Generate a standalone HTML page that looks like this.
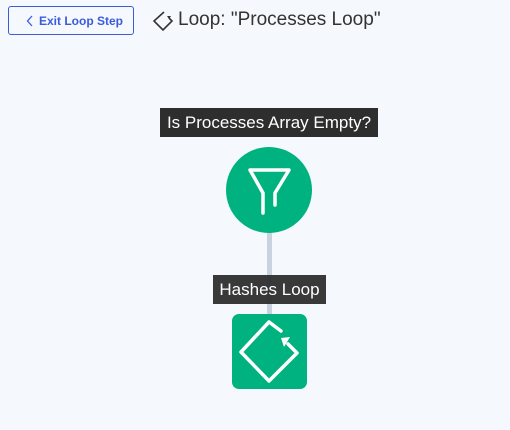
<!DOCTYPE html>
<html><head><style>
body{margin:0;width:510px;height:430px;background:#f5f9fd;font-family:"Liberation Sans",sans-serif;position:relative;overflow:hidden}
.btn{position:absolute;left:8px;top:6px;width:126px;height:29px;border:1px solid #3b5bdb;border-radius:3px;color:#3b5bdb;font-size:12px;font-weight:bold;box-sizing:border-box;line-height:28px}
.title{position:absolute;left:178px;top:9px;font-size:19px;color:#333}
.lbl{position:absolute;background:#2e2e2e;color:#fff;font-size:17px;text-align:center;box-sizing:border-box}
</style></head><body>
<div class="btn"><svg style="position:absolute;left:17px;top:8px" width="8" height="12"><path d="M6 1 L1.5 6 L6 11" fill="none" stroke="#3b5bdb" stroke-width="1.3"/></svg><span style="position:absolute;left:30px">Exit Loop Step</span></div>
<svg style="position:absolute;left:152px;top:10px" width="22" height="22"><path d="M12 2 L2 11 L11 20 L20 11 L17 8" fill="none" stroke="#333" stroke-width="1.6"/><path d="M15 6 L19 6 L17 9z" fill="#333"/></svg>
<div class="title">Loop: "Processes Loop"</div>
<div style="position:absolute;left:267px;top:232px;width:5px;height:84px;background:#c8d3df"></div>
<div class="lbl" style="left:160px;top:108px;width:218px;height:29px;line-height:29px">Is Processes Array Empty?</div>
<div style="position:absolute;left:226px;top:147px;width:86px;height:86px;border-radius:50%;background:#00b27f"></div>
<svg style="position:absolute;left:226px;top:147px" width="86" height="86"><path d="M24 23 L63 23 L49 46 L49 58 M37 66 L37 46 L24 23" fill="none" stroke="#fff" stroke-width="3.5" stroke-linecap="round" stroke-linejoin="round"/></svg>
<div class="lbl" style="left:213px;top:275px;width:113px;height:29px;line-height:29px;background:rgba(46,46,46,0.95)">Hashes Loop</div>
<div style="position:absolute;left:232px;top:314px;width:75px;height:75px;border-radius:7px;background:#00b27f"></div>
<svg style="position:absolute;left:232px;top:314px" width="75" height="75"><path d="M49 17 L37 8 L9 38 L37 67 L65 39 L56 30" fill="none" stroke="#fff" stroke-width="3.5" stroke-linejoin="round" stroke-linecap="round"/><path d="M49 24 L58 23 L52 33z" fill="#fff"/></svg>
</body></html>
